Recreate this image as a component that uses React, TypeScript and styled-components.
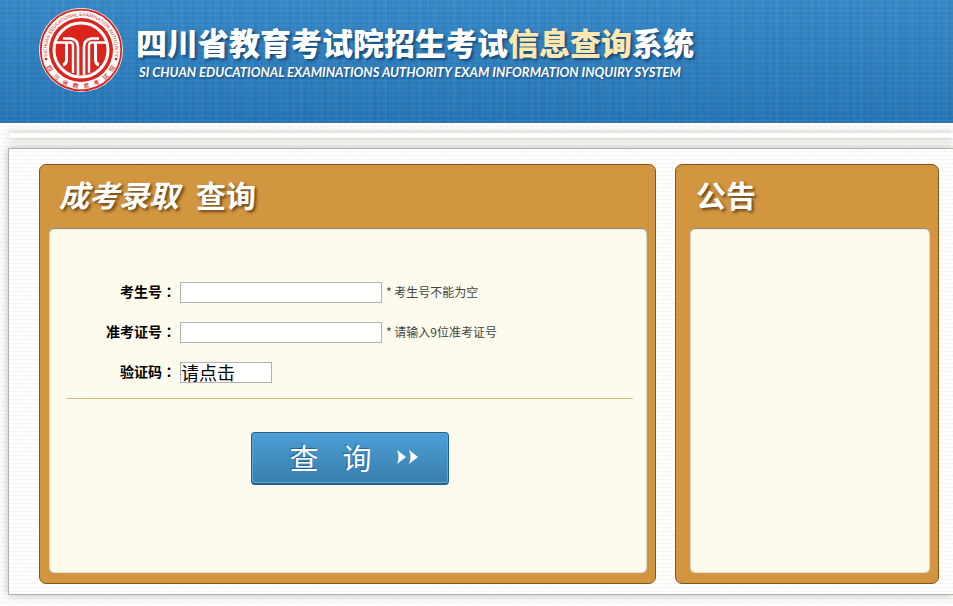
import React from "react";
import styled, { createGlobalStyle } from "styled-components";

const sans = '"Noto Sans CJK SC", "Noto Sans", sans-serif';

const paper = `
  repeating-linear-gradient(45deg, rgba(255,255,255,0.6) 0 2px, transparent 2px 4px),
  repeating-linear-gradient(180deg, #fdfdfb 0 2px, #f2f3ee 2px 3px, #fdfdfb 3px 4px)
`;

const GlobalStyle = createGlobalStyle`
  * { box-sizing: border-box; }
  html { min-height: 100%; overflow: hidden; background: #fcfcfa; }
  body {
    margin: 0;
    min-height: 100vh;
    font-family: ${sans};
    font-size: 14px;
    background: ${paper};
  }
`;

const Header = styled.header`
  display: flex;
  gap: 12px;
  height: 123px;
  padding: 8px 0 0 38px;
  background:
    repeating-linear-gradient(90deg, rgba(255,255,255,0.03) 0 1px, transparent 1px 3px, rgba(0,30,80,0.04) 3px 4px, transparent 4px 7px),
    repeating-linear-gradient(90deg, rgba(0,40,100,0.04) 0 2px, transparent 2px 11px, rgba(255,255,255,0.04) 11px 12px, transparent 12px 17px),
    repeating-linear-gradient(180deg, rgba(255,255,255,0.03) 0 1px, transparent 1px 3px, rgba(0,30,80,0.04) 3px 4px, transparent 4px 5px),
    repeating-linear-gradient(180deg, rgba(0,40,100,0.04) 0 1px, transparent 1px 13px),
    linear-gradient(#3889c7, #2776b5);
`;

const Seal = styled.svg`
  flex: none;
  width: 86px;
  height: 86px;
`;

const Brand = styled.div`
  padding-top: 12px;
  color: #fff;
  white-space: nowrap;
`;

const SiteTitle = styled.h1`
  margin: 0;
  font-size: 31px;
  line-height: 44px;
  font-weight: 900;
  text-shadow: 2px 2px 3px rgba(0, 30, 70, 0.6);
`;

const Accent = styled.span`
  color: #fde8b0;
`;

const SiteSubtitle = styled.p`
  margin: 0;
  padding-left: 3px;
  font: italic 700 13px/16px Lato, sans-serif;
  text-shadow: 1px 1px 2px rgba(0, 30, 70, 0.6);
`;

const Strip = styled.div`
  height: 5px;
  margin: 10px 0 10px 9px;
  background: #fff;
  box-shadow: 0 0 7px rgba(60, 60, 50, 0.35);
`;

const Frame = styled.main`
  display: grid;
  grid-template-columns: minmax(0, 617fr) minmax(0, 264fr);
  gap: 19px;
  margin-left: 8px;
  padding: 15px 14px 10px 30px;
  border: 1px solid #b0b0ae;
  border-right: 0;
  background: ${paper};
  box-shadow: 0 0 8px rgba(60, 60, 50, 0.35);
`;

const Panel = styled.section<{ $side: number }>`
  display: flex;
  flex-direction: column;
  min-height: 420px;
  padding: 0 8px 10px ${(p) => p.$side}px;
  border: 1px solid #85561a;
  border-radius: 7px;
  background: #d29540;
`;

const PanelTitle = styled.h2<{ $indent: number }>`
  display: flex;
  gap: 17px;
  margin: 0;
  padding: 7px 0 12px ${(p) => p.$indent}px;
  color: #fff;
  font-size: 30px;
  line-height: 44px;
  font-weight: 700;
  text-shadow: 2px 2px 3px rgba(70, 40, 0, 0.75);
`;

const Slanted = styled.em`
  font-style: italic;
`;

const Sheet = styled.div`
  flex: 1;
  padding: 49px 14px 0 17px;
  border-radius: 5px;
  background: #fdfbee;
  box-shadow: inset 0 1px 1px #8f8371, inset 0 0 2px #a59b88;
`;

const Fields = styled.div`
  display: flex;
  flex-direction: column;
  padding-bottom: 1px;
  border-bottom: 1px solid #cfc080;
`;

const Field = styled.div`
  display: flex;
  align-items: center;
  height: 40px;
  padding-bottom: 10px;
`;

const Label = styled.label`
  width: 110px;
  margin-right: 4px;
  padding-bottom: 2px;
  color: #000;
  font-size: 14px;
  font-weight: 700;
  line-height: 20px;
  text-align: right;
  white-space: nowrap;
`;

const Colon = styled.span`
  font-family: "Noto Sans CJK TC", sans-serif;
`;

const TextInput = styled.input<{ $short?: boolean }>`
  width: ${(p) => (p.$short ? 92 : 202)}px;
  height: 21px;
  padding: 0;
  border: 1px solid #b2b2b2;
  border-radius: 0;
  background: #fff;
  color: #000;
  font: ${(p) => (p.$short ? 18 : 14)}px/19px ${sans};
  outline: none;
`;

const Hint = styled.span`
  margin-left: 4px;
  color: #444;
  font-size: 12px;
  line-height: 20px;
  white-space: nowrap;
`;

const Submit = styled.button`
  display: flex;
  align-items: center;
  gap: 24px;
  width: 198px;
  height: 53px;
  margin: 33px auto 0;
  padding: 0 0 3px 38px;
  border: 1px solid #23608f;
  border-bottom-width: 2px;
  border-radius: 4px;
  background: linear-gradient(#4b9fd6, #397fad);
  box-shadow: inset 0 0 0 1px #5ba4d2;
  color: #fff;
  font: 29px/40px ${sans};
  text-shadow: -1px -1px 1px rgba(20, 70, 110, 0.6);
`;

const Arrows = styled.svg`
  width: 23px;
  height: 16px;
`;

const sealName = [..."四川省教育考试院"];

function AuthoritySeal() {
  const red = "#da251d";
  return (
    <Seal viewBox="0 0 86 86" role="img" aria-label="四川省教育考试院">
      <defs>
        <path id="seal-top" d="M 10.4 51.7 A 34 34 0 1 1 75.6 51.7" />
        <path id="seal-bottom" d="M 4.5 42 A 38.5 38.5 0 0 0 81.5 42" />
      </defs>
      <circle cx="43" cy="42" r="42" fill="#fff" />
      <circle cx="43" cy="42" r="40.3" fill="none" stroke={red} strokeWidth="1.8" />
      <text fill={red} fontFamily="Liberation Sans" fontSize="4.8">
        <textPath href="#seal-top" startOffset="50%" textAnchor="middle">
          SICHUAN EDUCATIONAL EXAMINATION AUTHORITY
        </textPath>
      </text>
      {sealName.map((char, i) => (
        <text key={char} fill={red} fontFamily="Noto Sans CJK SC" fontSize="6" fontWeight="500">
          <textPath href="#seal-bottom" startOffset={`${17 + (i * 66) / 7}%`} textAnchor="middle">
            {char}
          </textPath>
        </text>
      ))}
      <circle cx="8" cy="51" r="1.3" fill={red} />
      <circle cx="78" cy="51" r="1.3" fill={red} />
      <circle cx="43" cy="42" r="32" fill={red} />
      <circle cx="43" cy="42" r="27" fill="none" stroke="#fff" strokeWidth="3" />
      <path
        d="M25 30.5 H33 Q40 32 40 39 V67 M61 30.5 H53 Q46 32 46 39 V67"
        fill="none"
        stroke="#fff"
        strokeWidth="2.6"
      />
      <path
        d="M18 34.5 H33 Q35 35 35 38 V65 M68 34.5 H53 Q51 35 51 38 V65"
        fill="none"
        stroke="#fff"
        strokeWidth="2.4"
      />
      <path d="M28.5 35 V52 Q28.5 56 25 57 M57.5 35 V52 Q57.5 56 61 57" fill="none" stroke="#fff" strokeWidth="3" />
    </Seal>
  );
}

export default function App() {
  return (
    <>
      <GlobalStyle />
      <Header>
        <AuthoritySeal />
        <Brand>
          <SiteTitle>
            四川省教育考试院招生考试<Accent>信息查询</Accent>系统
          </SiteTitle>
          <SiteSubtitle>SI CHUAN EDUCATIONAL EXAMINATIONS AUTHORITY EXAM INFORMATION INQUIRY SYSTEM</SiteSubtitle>
        </Brand>
      </Header>
      <Strip />
      <Frame>
        <Panel $side={9}>
          <PanelTitle $indent={10}>
            <Slanted>成考录取</Slanted>
            <span>查询</span>
          </PanelTitle>
          <Sheet>
            <form onSubmit={(e) => e.preventDefault()}>
              <Fields>
                <Field>
                  <Label htmlFor="candidate">考生号<Colon>：</Colon></Label>
                  <TextInput id="candidate" type="text" />
                  <Hint>* 考生号不能为空</Hint>
                </Field>
                <Field>
                  <Label htmlFor="ticket">准考证号<Colon>：</Colon></Label>
                  <TextInput id="ticket" type="text" />
                  <Hint>* 请输入9位准考证号</Hint>
                </Field>
                <Field>
                  <Label htmlFor="captcha">验证码<Colon>：</Colon></Label>
                  <TextInput id="captcha" type="text" defaultValue="请点击" $short />
                </Field>
              </Fields>
              <Submit type="submit">
                <span>查</span>
                <span>询</span>
                <Arrows viewBox="0 0 23 16" aria-hidden="true">
                  <path d="M1 1 L10 8 L1 15 Q4 8 1 1 Z M13 1 L22 8 L13 15 Q16 8 13 1 Z" fill="#fff" />
                </Arrows>
              </Submit>
            </form>
          </Sheet>
        </Panel>
        <Panel $side={14}>
          <PanelTitle $indent={6}>公告</PanelTitle>
          <Sheet />
        </Panel>
      </Frame>
    </>
  );
}
